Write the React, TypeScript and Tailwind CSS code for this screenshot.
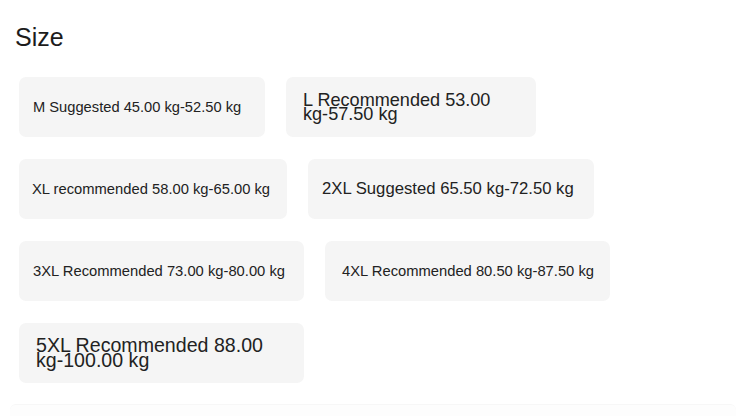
import React from "react";

type SizeOption = {
  label: string;
  width: string;
  pad: string;
  text: string;
};

// each chip came out with its own width and type size, so keep them per item
const SIZES: SizeOption[] = [
  { label: "M Suggested 45.00 kg-52.50 kg", width: "w-[246px]", pad: "pl-[14px]", text: "text-[14.7px] leading-[16px]" },
  { label: "L Recommended 53.00 kg-57.50 kg", width: "w-[250px]", pad: "pl-[17px] pr-[30px]", text: "text-[18.1px] leading-[14px]" },
  { label: "XL recommended 58.00 kg-65.00 kg", width: "w-[268px]", pad: "pl-[13px]", text: "text-[14.75px] leading-[16px]" },
  { label: "2XL Suggested 65.50 kg-72.50 kg", width: "w-[286px]", pad: "pl-[14px]", text: "text-[16.7px] leading-[18px]" },
  { label: "3XL Recommended 73.00 kg-80.00 kg", width: "w-[285px]", pad: "pl-[14px]", text: "text-[14.75px] leading-[16px]" },
  { label: "4XL Recommended 80.50 kg-87.50 kg", width: "w-[285px]", pad: "pl-[17px]", text: "text-[14.75px] leading-[16px]" },
  { label: "5XL Recommended 88.00 kg-100.00 kg", width: "w-[285px]", pad: "pl-[17px] pr-[20px]", text: "text-[19.6px] leading-[15px]" },
];

export default function App() {
  return (
    <div
      className="relative h-[416px] w-[736px] overflow-hidden bg-white text-[#222]"
      style={{ fontFamily: '"Liberation Sans", Arial, sans-serif' }}
    >
      <div className="px-[15px] pt-[22px]">
        <h2 className="text-[25px] leading-[30px] text-[#1c1c1c]">Size</h2>
      </div>

      {/* Size chips */}
      <div className="mt-[25px] flex w-[620px] flex-wrap gap-x-[21px] gap-y-[22px] pl-[19px]">
        {SIZES.map((s) => (
          <div
            key={s.label}
            className={`flex h-[60px] items-center rounded-[7px] bg-[#f5f5f5] ${s.width} ${s.pad}`}
          >
            <span className={s.text}>{s.label}</span>
          </div>
        ))}
      </div>

      {/* next section, barely visible */}
      <div className="mt-[21px] ml-[10px] h-[20px] rounded-t-[6px] border-t border-[#f7f7f7] bg-[#fdfdfd]" />
    </div>
  );
}
